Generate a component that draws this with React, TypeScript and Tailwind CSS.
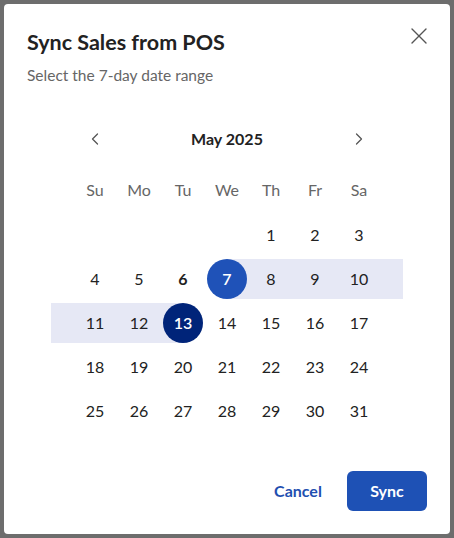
import { ChevronLeft, ChevronRight, X } from 'lucide-react';

const weekDays = ['Su', 'Mo', 'Tu', 'We', 'Th', 'Fr', 'Sa'];

const weeks: (number | null)[][] = [
  [null, null, null, null, 1, 2, 3],
  [4, 5, 6, 7, 8, 9, 10],
  [11, 12, 13, 14, 15, 16, 17],
  [18, 19, 20, 21, 22, 23, 24],
  [25, 26, 27, 28, 29, 30, 31],
];

const rangeStart = 7;
const rangeEnd = 13;
const today = 6;

function DayCell({ day }: { day: number | null }) {
  if (day === null) return <div className="w-[44px] h-10" />;
  const inRange = day > rangeStart && day < rangeEnd;
  let band = '';
  if (inRange) band = 'bg-[#e6e8f5]';
  if (day === rangeStart) band = 'bg-[linear-gradient(to_right,transparent_50%,#e6e8f5_50%)]';
  if (day === rangeEnd) band = 'bg-[linear-gradient(to_right,#e6e8f5_50%,transparent_50%)]';

  let circle = 'text-[#222]';
  if (day === rangeStart) circle = 'bg-[#1f52b8] text-white font-semibold';
  if (day === rangeEnd) circle = 'bg-[#002479] text-white font-semibold';
  if (day === today) circle = 'text-[#222] font-bold';

  return (
    <div className={`w-[44px] h-10 flex items-center justify-center ${band}`}>
      <div className={`w-10 h-10 rounded-full flex items-center justify-center ${circle}`}>{day}</div>
    </div>
  );
}

export default function App() {
  return (
    <div className="w-[454px] h-[538px] bg-[#6d6d6d] p-1 font-['Lato',sans-serif]">
      <div className="w-[446px] h-[530px] bg-white rounded flex flex-col pt-6 pb-[23px]">
        <div className="flex items-start justify-between pl-[23px] pr-[17px]">
          <div>
            <h1 className="text-[21.5px] leading-7 font-bold text-[#222]">Sync Sales from POS</h1>
            <p className="mt-[9px] text-[15.5px] leading-5 text-[#666]">Select the 7-day date range</p>
          </div>
          <button className="-mt-[6px] text-[#555]">
            <X className="w-7 h-7" strokeWidth={1.2} />
          </button>
        </div>

        <div className="mt-8 flex flex-col items-center text-base">
          <div className="w-[308px] h-11 flex items-center justify-between text-[#555]">
            <button className="w-[44px] h-11 flex items-center justify-center">
              <ChevronLeft className="w-5 h-5" strokeWidth={1.5} />
            </button>
            <span className="font-bold text-[#222]">May 2025</span>
            <button className="w-[44px] h-11 flex items-center justify-center">
              <ChevronRight className="w-5 h-5" strokeWidth={1.5} />
            </button>
          </div>
          <div className="mt-[7px] mb-[1px] flex h-11 items-center">
            {weekDays.map((d) => (
              <div key={d} className="w-[44px] text-center text-[#666]">
                {d}
              </div>
            ))}
          </div>
          {weeks.map((w, i) => {
            const first = w[0] ?? 0;
            const leadBand = first > rangeStart && first <= rangeEnd;
            const last = w[6] ?? 0;
            const trailBand = last >= rangeStart && last < rangeEnd;
            return (
              <div key={i} className="flex h-11 items-center">
                <div className={`w-[22px] h-10 ${leadBand ? 'bg-[#e6e8f5]' : ''}`} />
                {w.map((d, j) => (
                  <DayCell key={j} day={d} />
                ))}
                <div className={`w-[22px] h-10 ${trailBand ? 'bg-[#e6e8f5]' : ''}`} />
              </div>
            );
          })}
        </div>

        <div className="mt-auto flex justify-end items-center gap-[10px] pr-[23px]">
          <button className="h-10 w-[78px] font-bold text-[#1f4fb0]">Cancel</button>
          <button className="h-10 w-20 rounded-md bg-[#1e51b5] text-white font-bold">Sync</button>
        </div>
      </div>
    </div>
  );
}
